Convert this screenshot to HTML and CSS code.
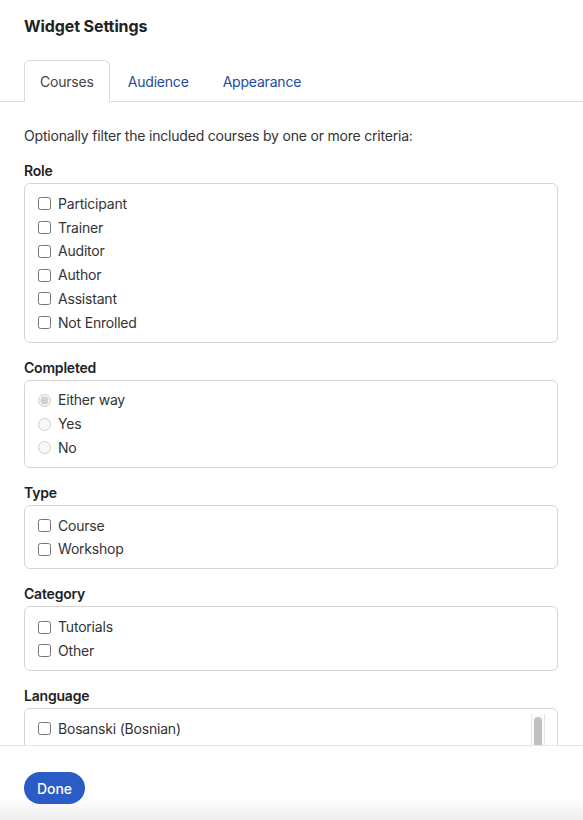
FILE: index.html
```html
<!DOCTYPE html>
<html lang="en">
<head>
<meta charset="utf-8">
<title>Widget Settings</title>
<link rel="stylesheet" href="styles.css">
</head>
<body>
<div class="dialog">
  <header class="head">
    <h1 class="title">Widget Settings</h1>
    <nav class="tabs">
      <span class="tab active">Courses</span>
      <span class="tab">Audience</span>
      <span class="tab">Appearance</span>
    </nav>
  </header>
  <main class="content">
    <p class="intro">Optionally filter the included courses by one or more criteria:</p>

    <section class="group">
      <h2 class="label">Role</h2>
      <div class="box">
        <label class="row"><input type="checkbox">Participant</label>
        <label class="row"><input type="checkbox">Trainer</label>
        <label class="row"><input type="checkbox">Auditor</label>
        <label class="row"><input type="checkbox">Author</label>
        <label class="row"><input type="checkbox">Assistant</label>
        <label class="row"><input type="checkbox">Not Enrolled</label>
      </div>
    </section>

    <section class="group">
      <h2 class="label">Completed</h2>
      <div class="box">
        <label class="row"><input type="radio" name="c" checked disabled>Either way</label>
        <label class="row"><input type="radio" name="c" disabled>Yes</label>
        <label class="row"><input type="radio" name="c" disabled>No</label>
      </div>
    </section>

    <section class="group">
      <h2 class="label">Type</h2>
      <div class="box">
        <label class="row"><input type="checkbox">Course</label>
        <label class="row"><input type="checkbox">Workshop</label>
      </div>
    </section>

    <section class="group">
      <h2 class="label">Category</h2>
      <div class="box">
        <label class="row"><input type="checkbox">Tutorials</label>
        <label class="row"><input type="checkbox">Other</label>
      </div>
    </section>

    <section class="group">
      <h2 class="label">Language</h2>
      <div class="box lang">
        <div class="lang-list">
          <label class="row"><input type="checkbox">Bosanski (Bosnian)</label>
          <label class="row"><input type="checkbox">Deutsch (German)</label>
          <label class="row"><input type="checkbox">English</label>
          <label class="row"><input type="checkbox">Español (Spanish)</label>
          <label class="row"><input type="checkbox">Français (French)</label>
        </div>
        <div class="scrollbar" aria-hidden="true"><div class="thumb"></div></div>
      </div>
    </section>
  </main>
  <footer class="foot">
    <button class="done" type="button">Done</button>
  </footer>
</div>
</body>
</html>
```
FILE: styles.css
```css
html, body {
  margin: 0;
  padding: 0;
  background: #ffffff;
}
body {
  font-family: Inter, "Noto Sans", "Liberation Sans", sans-serif;
  color: #333;
  font-size: 14px;
  letter-spacing: -0.2px;
}
.dialog {
  width: 583px;
  height: 820px;
  display: flex;
  flex-direction: column;
  overflow: hidden;
}
.head {
  padding-top: 16px;
  flex: none;
}
.title {
  margin: 0 0 24px 24px;
  font-size: 16px;
  line-height: 20px;
  font-weight: 700;
  color: #222;
  letter-spacing: -0.1px;
}
.tabs {
  display: flex;
  gap: 2px;
  padding-left: 24px;
  border-bottom: 1px solid #dadada;
  height: 41px;
}
.tab {
  display: flex;
  align-items: center;
  padding: 0 15px;
  border: 1px solid transparent;
  border-bottom: none;
  border-radius: 6px 6px 0 0;
  color: #1f4aa0;
  font-size: 14px;
  height: 41px;
  box-sizing: border-box;
}
.tab.active {
  color: #444;
  border-color: #dadada;
  background: #fff;
  height: 42px;
  margin-bottom: -1px;
}
.content {
  flex: 1;
  overflow: hidden;
  padding: 24px 25px 0 24px;
}
.intro {
  margin: 0 0 15px;
  line-height: 20px;
  color: #333;
}
.group {
  margin-bottom: 15px;
}
.label {
  margin: 0 0 2px;
  font-size: 14px;
  line-height: 20px;
  font-weight: 600;
  color: #222;
}
.box {
  border: 1px solid #d4d4d4;
  border-radius: 6px;
  padding: 8px 13px 7px;
}
.row {
  display: flex;
  align-items: center;
  gap: 7px;
  height: 23.75px;
  line-height: 20px;
  color: #333;
}
.row input {
  margin: 0;
  width: 13px;
  height: 13px;
}
.box.lang {
  display: flex;
  padding: 0 12px 0 13px;
  height: 130px;
  overflow: hidden;
}
.lang-list {
  flex: 1;
  padding-top: 8px;
}
.scrollbar {
  flex: none;
  width: 12px;
  margin-top: 5px;
  margin-bottom: 5px;
  background: #fafafa;
  border-left: 1px solid #e6e6e6;
  border-right: 1px solid #e6e6e6;
  display: flex;
  justify-content: center;
  padding-top: 3px;
}
.thumb {
  width: 8px;
  height: 70px;
  background: #c1c1c1;
  border-radius: 4px;
}
.foot {
  flex: none;
  height: 75px;
  border-top: 1px solid #e6e6e6;
  padding: 26px 24px 0;
  box-sizing: border-box;
  background: linear-gradient(to bottom, #ffffff 0, #ffffff 52px, #ececec 75px);
}
.done {
  font-family: inherit;
  font-size: 14px;
  font-weight: 500;
  letter-spacing: -0.1px;
  color: #fff;
  background: #2a5bc6;
  border: none;
  border-radius: 16px;
  height: 32px;
  width: 61px;
  padding: 0;
  cursor: pointer;
}
```
